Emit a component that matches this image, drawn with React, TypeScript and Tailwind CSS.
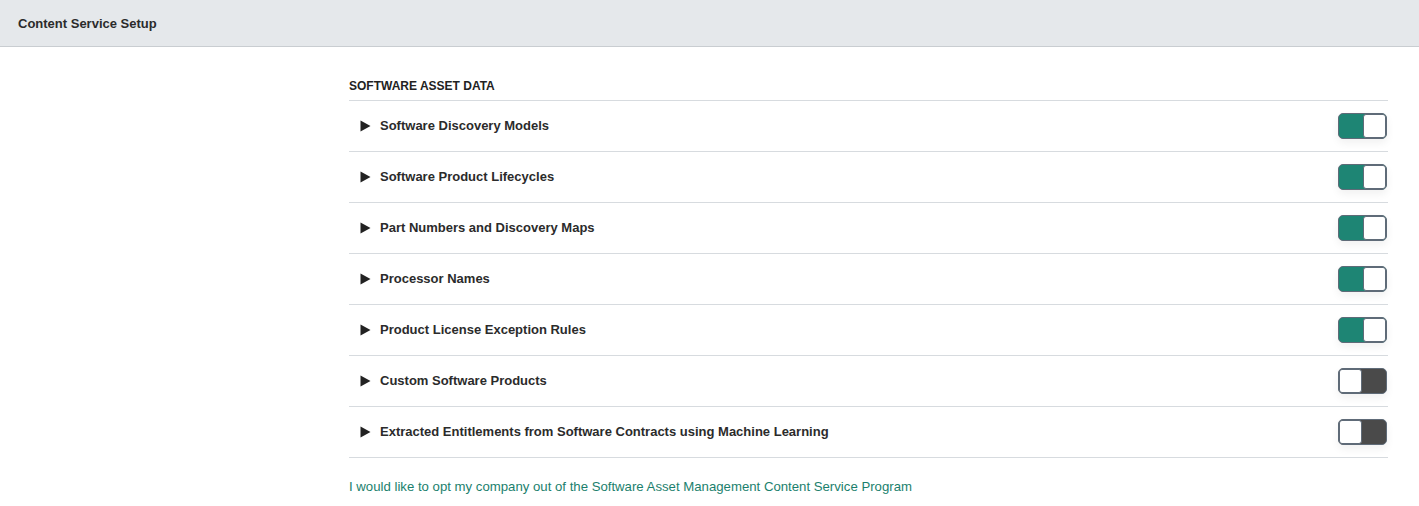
import { useState } from 'react';

const items = [
  { name: 'Software Discovery Models', on: true },
  { name: 'Software Product Lifecycles', on: true },
  { name: 'Part Numbers and Discovery Maps', on: true },
  { name: 'Processor Names', on: true },
  { name: 'Product License Exception Rules', on: true },
  { name: 'Custom Software Products', on: false },
  { name: 'Extracted Entitlements from Software Contracts using Machine Learning', on: false },
];

function Toggle({ on, onClick }: { on: boolean; onClick: () => void }) {
  return (
    <button
      onClick={onClick}
      className={`flex h-[26px] w-[49px] items-stretch rounded-[5px] border-[1.5px] border-[#5f6b78] p-0 shadow-[0_4px_8px_rgba(0,0,0,0.06)] ${
        on ? 'justify-end bg-[#1e8574]' : 'justify-start bg-[#4a4a4a]'
      }`}
    >
      <span className="w-[23px] rounded-[3px] border-[1.5px] border-[#5f6b78] bg-white" />
    </button>
  );
}

export default function App() {
  const [state, setState] = useState(items.map((i) => i.on));

  return (
    <div className="min-h-[506px] bg-white font-['Liberation_Sans',Arial,sans-serif] text-[#222]">
      {/* Title bar */}
      <div className="flex h-[47px] items-center border-b border-[#c9cdd1] bg-[#e5e8eb] px-[18px] pt-[1px]">
        <h1 className="text-[13px] font-bold text-[#2b2b2b]">Content Service Setup</h1>
      </div>

      <div className="ml-[349px] mr-[31px] pt-[32px]">
        <div className="pb-[7px] text-[12px] font-bold leading-[14px] text-[#222]">SOFTWARE ASSET DATA</div>
        <div className="border-t border-[#d7dbdf]">
          {items.map((item, i) => (
            <div
              key={item.name}
              className="flex h-[51px] items-center border-b border-[#d7dbdf] pl-[11px] pr-[1px]"
            >
              <svg width="11" height="12" viewBox="0 0 11 12" className="mr-[9px] shrink-0">
                <path d="M0.5 0.5 L10.5 6 L0.5 11.5 Z" fill="#222" />
              </svg>
              <span className="flex-1 text-[13px] font-bold text-[#2b2b2b]">{item.name}</span>
              <Toggle
                on={state[i]}
                onClick={() => setState((s) => s.map((v, j) => (j === i ? !v : v)))}
              />
            </div>
          ))}
        </div>
        <a href="#" className="mt-[19px] block text-[13.2px] text-[#1b7f6d]">
          I would like to opt my company out of the Software Asset Management Content Service Program
        </a>
      </div>
    </div>
  );
}
